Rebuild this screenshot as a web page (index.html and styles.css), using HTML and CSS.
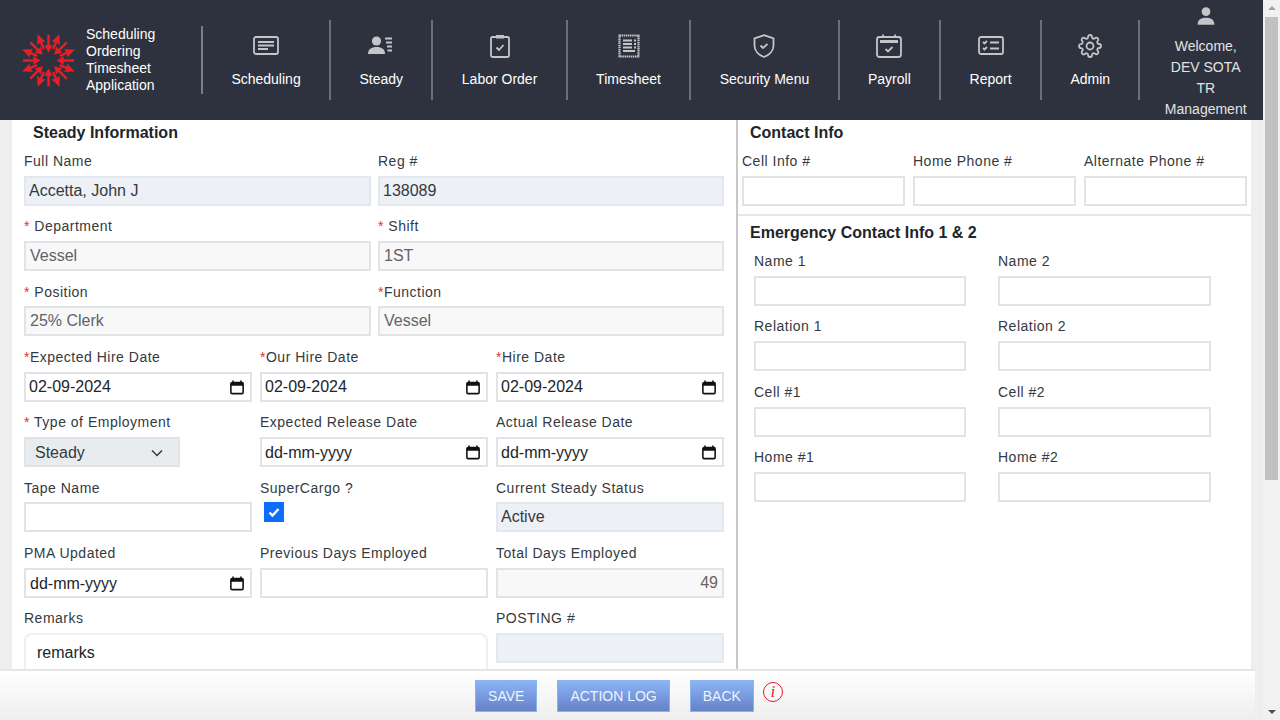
FILE: index.html
```html
<!DOCTYPE html>
<html lang="en">
<head>
    <meta charset="UTF-8">
    <title>Steady Information</title>
    <link rel="stylesheet" href="styles.css">
</head>
<body>
    <svg class="defs" width="0" height="0">
        <symbol id="cal" viewBox="0 0 16 16">
            <path d="M3.500 0v3M12.500 0v3" fill="none" stroke="#111" stroke-width="1.800"/>
            <rect x="1" y="2.400" width="14" height="12.600" rx="1.400" fill="none" stroke="#111" stroke-width="1.800"/>
            <rect x="1" y="2.400" width="14" height="3.600" fill="#111"/>
        </symbol>
        <symbol id="arrow" viewBox="0 0 60 60">
            <path d="M28.700 3h2.600v11h3.200L30 21.500 25.500 14h3.200z" fill="#ec1c24"/>
            <path d="M30 0 34.800 10.500 31.300 9.500V17h-2.600V9.500L25.200 10.500z" fill="#ec1c24" transform="rotate(22.500 30 30)"/>
        </symbol>
    </svg>
    <div class="app">
        <div class="page">
            <header class="topbar">
                <div class="brand">
                    <svg class="logo" viewBox="0 0 60 60" width="57" height="57">
                        <use href="#arrow" width="60" height="60"/>
                        <use href="#arrow" width="60" height="60" transform="rotate(45 30 30)"/>
                        <use href="#arrow" width="60" height="60" transform="rotate(90 30 30)"/>
                        <use href="#arrow" width="60" height="60" transform="rotate(135 30 30)"/>
                        <use href="#arrow" width="60" height="60" transform="rotate(180 30 30)"/>
                        <use href="#arrow" width="60" height="60" transform="rotate(225 30 30)"/>
                        <use href="#arrow" width="60" height="60" transform="rotate(270 30 30)"/>
                        <use href="#arrow" width="60" height="60" transform="rotate(315 30 30)"/>
                    </svg>
                    <div class="brand-text">Scheduling<br>Ordering<br>Timesheet<br>Application</div>
                </div>
                <nav class="menu">
                    <a class="menu-item">
                        <svg class="short" viewBox="0 0 26 20" width="26" height="20"><rect x="1" y="1" width="24" height="17" rx="2" class="ln"/><path d="M5 6h16M5 9.500h16M5 13h10" class="ln"/></svg>
                        <span>Scheduling</span>
                    </a>
                    <a class="menu-item">
                        <svg class="short" viewBox="0 0 26 20" width="26" height="20"><circle cx="8.500" cy="5" r="4.600" class="fl"/><path d="M0 18c0-5 3.500-7 8.500-7s8.500 2 8.500 7z" class="fl"/><path d="M17 2.500h7M18 6.500h6M19 10.500h5M19.500 14.500h4.500" class="ln"/></svg>
                        <span>Steady</span>
                    </a>
                    <a class="menu-item">
                        <svg viewBox="0 0 20 24" width="20" height="24"><path d="M6 3H2.500Q1 3 1 4.500v17Q1 23 2.500 23h15q1.500 0 1.500-1.500v-17Q19 3 17.500 3H14" class="ln"/><rect x="6" y="1" width="8" height="3.500" class="fl"/><path d="m6.500 13.500 2.500 2.500 4.500-5" class="ln"/></svg>
                        <span>Labor Order</span>
                    </a>
                    <a class="menu-item">
                        <svg viewBox="0 0 22 24" width="22" height="24"><path d="M1.500 1.500h19v21h-19z" class="ln dash"/><path d="M5 6.500h9M5 10h9M5 13.500h9M5 17h12M16 6.500h2M16 10h2M16 13.500h2" class="ln"/></svg>
                        <span>Timesheet</span>
                    </a>
                    <a class="menu-item">
                        <svg viewBox="0 0 22 24" width="22" height="24"><path d="M11 1.200 20.500 4.500v7c0 5-4 9.500-9.500 11.500C5.500 21 1.500 16.500 1.500 11.500v-7z" class="ln"/><path d="m7.500 11.500 2.500 2.500 4.500-4" class="ln"/></svg>
                        <span>Security Menu</span>
                    </a>
                    <a class="menu-item">
                        <svg viewBox="0 0 26 24" width="26" height="24"><rect x="1" y="3" width="24" height="20" rx="2.500" class="ln"/><path d="M7 .500v3M19 .500v3" class="ln"/><rect x="4" y="6" width="18" height="3" class="fl"/><path d="m9.500 15 2.500 2.500 4.500-4.500" class="ln"/></svg>
                        <span>Payroll</span>
                    </a>
                    <a class="menu-item">
                        <svg class="short" viewBox="0 0 26 20" width="26" height="20"><rect x="1" y="1" width="24" height="17" rx="2" class="ln"/><path d="m5 6 1.500 1.500L9 5M5 12l1.500 1.500L9 11M12 6.500h9M12 12.500h9" class="ln"/></svg>
                        <span>Report</span>
                    </a>
                    <a class="menu-item">
                        <svg viewBox="0 0 24 24" width="24" height="24"><circle cx="12" cy="12" r="3.500" class="ln"/><path class="ln" d="M19.400 15a1.650 1.650 0 0 0 .33 1.820l.06.06a2 2 0 0 1 0 2.830 2 2 0 0 1-2.830 0l-.06-.06a1.650 1.650 0 0 0-1.820-.33 1.650 1.650 0 0 0-1 1.510V21a2 2 0 0 1-2 2 2 2 0 0 1-2-2v-.09A1.650 1.650 0 0 0 9 19.400a1.650 1.650 0 0 0-1.820.33l-.06.06a2 2 0 0 1-2.830 0 2 2 0 0 1 0-2.830l.06-.06a1.650 1.650 0 0 0 .33-1.820 1.650 1.650 0 0 0-1.510-1H3a2 2 0 0 1-2-2 2 2 0 0 1 2-2h.09A1.650 1.650 0 0 0 4.600 9a1.650 1.650 0 0 0-.33-1.820l-.06-.06a2 2 0 0 1 0-2.830 2 2 0 0 1 2.830 0l.06.06a1.650 1.650 0 0 0 1.820.33H9a1.650 1.650 0 0 0 1-1.510V3a2 2 0 0 1 2-2 2 2 0 0 1 2 2v.09a1.650 1.650 0 0 0 1 1.510 1.650 1.650 0 0 0 1.820-.33l.06-.06a2 2 0 0 1 2.830 0 2 2 0 0 1 0 2.830l-.06.06a1.650 1.650 0 0 0-.33 1.820V9a1.650 1.650 0 0 0 1.510 1H21a2 2 0 0 1 2 2 2 2 0 0 1-2 2h-.09a1.650 1.650 0 0 0-1.510 1z"/></svg>
                        <span>Admin</span>
                    </a>
                    <a class="menu-item user">
                        <svg viewBox="0 0 20 20" width="20" height="20"><circle cx="10" cy="5" r="4.700" class="fl"/><path d="M1 19c0-5 3-7.500 9-7.500s9 2.500 9 7.500z" class="fl"/></svg>
                        <span>Welcome,</span>
                        <span>DEV SOTA</span>
                        <span>TR</span>
                        <span>Management</span>
                    </a>
                </nav>
            </header>

            <main class="content">
                <section class="steady">
                    <h3 class="title">Steady Information</h3>
                    <div class="form">
                        <div class="field half"><label>Full Name</label><input class="locked" value="Accetta, John J"></div>
                        <div class="field half"><label>Reg #</label><input class="locked" value="138089"></div>
                        <div class="field half"><label><i>*</i> Department</label><input class="grey" value="Vessel"></div>
                        <div class="field half"><label><i>*</i> Shift</label><input class="grey" value="1ST"></div>
                        <div class="field half"><label><i>*</i> Position</label><input class="grey" value="25% Clerk"></div>
                        <div class="field half"><label><i>*</i>Function</label><input class="grey" value="Vessel"></div>

                        <div class="field third"><label><i>*</i>Expected Hire Date</label><div class="date">02-09-2024<svg width="14" height="15"><use href="#cal"/></svg></div></div>
                        <div class="field third"><label><i>*</i>Our Hire Date</label><div class="date">02-09-2024<svg width="14" height="15"><use href="#cal"/></svg></div></div>
                        <div class="field third"><label><i>*</i>Hire Date</label><div class="date">02-09-2024<svg width="14" height="15"><use href="#cal"/></svg></div></div>

                        <div class="field third">
                            <label><i>*</i> Type of Employment</label>
                            <div class="select">Steady<svg width="12" height="8" viewBox="0 0 12 8"><path d="m1 1.500 5 5 5-5" fill="none" stroke="#343a40" stroke-width="1.500"/></svg></div>
                        </div>
                        <div class="field third"><label>Expected Release Date</label><div class="date">dd-mm-yyyy<svg width="14" height="15"><use href="#cal"/></svg></div></div>
                        <div class="field third"><label>Actual Release Date</label><div class="date">dd-mm-yyyy<svg width="14" height="15"><use href="#cal"/></svg></div></div>

                        <div class="field third"><label>Tape Name</label><input></div>
                        <div class="field third">
                            <label>SuperCargo ?</label>
                            <span class="check"><svg width="20" height="20" viewBox="0 0 20 20"><path d="m5.500 10.500 3 3 6-6.500" fill="none" stroke="#fff" stroke-width="2.400"/></svg></span>
                        </div>
                        <div class="field third"><label>Current Steady Status</label><input class="locked" value="Active"></div>

                        <div class="field third"><label>PMA Updated</label><div class="date shifted">dd-mm-yyyy<svg width="14" height="15"><use href="#cal"/></svg></div></div>
                        <div class="field third"><label>Previous Days Employed</label><input></div>
                        <div class="field third"><label>Total Days Employed</label><input class="grey num" value="49"></div>

                        <div class="field two-thirds"><label>Remarks</label><div class="remarks">remarks</div></div>
                        <div class="field third"><label>POSTING #</label><input class="locked"></div>
                    </div>
                </section>

                <section class="contact">
                    <div class="contact-top">
                        <h3 class="title">Contact Info</h3>
                        <div class="phones">
                            <div class="field"><label>Cell Info #</label><input></div>
                            <div class="field"><label>Home Phone #</label><input></div>
                            <div class="field"><label>Alternate Phone #</label><input></div>
                        </div>
                    </div>
                    <h3 class="title second">Emergency Contact Info 1 &amp; 2</h3>
                    <div class="emergency">
                        <div class="field"><label>Name 1</label><input></div>
                        <div class="field"><label>Name 2</label><input></div>
                        <div class="field"><label>Relation 1</label><input></div>
                        <div class="field"><label>Relation 2</label><input></div>
                        <div class="field"><label>Cell #1</label><input></div>
                        <div class="field"><label>Cell #2</label><input></div>
                        <div class="field"><label>Home #1</label><input></div>
                        <div class="field"><label>Home #2</label><input></div>
                    </div>
                </section>
            </main>

            <footer class="actions">
                <button class="btn">SAVE</button>
                <button class="btn">ACTION LOG</button>
                <button class="btn">BACK</button>
                <span class="info">i</span>
            </footer>
        </div>
        <div class="scrollbar">
            <span class="up"></span>
            <span class="thumb"></span>
            <span class="down"></span>
        </div>
    </div>
</body>
</html>
```

FILE: styles.css
```css
* { margin: 0; padding: 0; box-sizing: border-box; }
html, body { height: 100%; overflow: hidden; }
body {
    font-family: "Liberation Sans", Arial, sans-serif;
    background-color: #eeeeee;
    color: #212529;
}
.defs { display: block; height: 0; }
.app { display: flex; height: 720px; }
.page { flex: 1; position: relative; overflow: hidden; }

/* top bar */
.topbar {
    height: 120px;
    background-color: #2e323e;
    display: flex;
    align-items: center;
    color: #fff;
}
.brand {
    width: 203px;
    height: 68px;
    flex: none;
    display: flex;
    align-items: center;
    padding-left: 20px;
    gap: 9px;
    border-right: 2px solid #7b7e86;
}
.brand-text { font-size: 14px; line-height: 17px; }
.menu { display: flex; flex: 1; height: 80px; }
.menu-item {
    display: flex;
    flex-direction: column;
    align-items: center;
    justify-content: flex-end;
    padding: 0 28.400px 13px;
    font-size: 14px;
    line-height: 16px;
    border-right: 2px solid #6c6f78;
    gap: 13px;
}
.menu-item svg { display: block; }
.menu-item svg.short { margin: 2px 0; }
.menu-item .ln { fill: none; stroke: #c4c5c9; stroke-width: 1.800; }
.menu-item .fl { fill: #c4c5c9; }
.menu-item .dash { stroke-dasharray: 1.500 .6; stroke-width: 2.200; }
.menu-item.user {
    border-right: 0;
    flex: 1;
    padding: 0 0 0 8px;
    gap: 0;
    justify-content: flex-start;
    line-height: 21.100px;
    color: #e2e3e5;
    height: 120px;
    margin-top: -20px;
}
.menu-item.user svg { margin: 7px 0 10px; }

/* content */
.content {
    margin: 0 12px;
    height: 600px;
    background-color: #fff;
    display: flex;
}
.title { font-size: 16px; line-height: 24px; font-weight: bold; color: #212529; padding-top: 1px; box-sizing: content-box; }
.field label {
    display: block;
    font-size: 14px;
    line-height: 21px;
    letter-spacing: .5px;
    color: #343a40;
    margin-bottom: 3.830px;
}
.field label i { font-style: normal; color: #e03131; }
.field input, .date, .select {
    display: block;
    width: 100%;
    height: 30px;
    border: 2px solid #e1e3e6;
    background-color: #fff;
    font-family: inherit;
    font-size: 16px;
    color: #495057;
    padding: 0 3px;
    outline: 0;
}
.field input.locked { background-color: #edf0f5; border-color: #e2e8ef; color: #343a40; }
.field input.grey { background-color: #f8f8f8; border-color: #e1e3e6; color: #5f6368; padding-left: 4px; }
.field input.num { text-align: right; padding-right: 4px; color: #6b625e; }
.half:nth-child(odd) input { width: 347px; }
.date {
    display: flex;
    align-items: center;
    justify-content: space-between;
    padding: 1px 6px 0 3px;
    color: #212529;
}
.date.shifted { padding: 2px 6px 0 4px; }
.select {
    width: 156px;
    display: flex;
    align-items: center;
    justify-content: space-between;
    background-color: #e9ecef;
    padding: 1px 15px 0 9px;
    color: #343a40;
}
.check {
    display: flex;
    width: 20px;
    height: 20px;
    margin: .5px 0 0 4px;
    background-color: #0d6efd;
}
.remarks {
    height: 90px;
    border: 2px solid #eeeff1;
    border-radius: 8px;
    padding: 6px 11px;
    font-size: 16px;
    line-height: 24px;
    color: #212529;
}

/* left form */
.steady { width: 726px; flex: none; border-right: 2px solid #c8c8c8; }
.steady .title { padding-left: 21px; }
.form {
    display: grid;
    grid-template-columns: repeat(6, 110px);
    grid-auto-rows: 65.330px;
    column-gap: 8px;
    padding: 6px 0 0 12px;
}
.half { grid-column: span 3; }
.third { grid-column: span 2; }
.two-thirds { grid-column: span 4; }

/* right column */
.contact { flex: 1; }
.contact .title { padding-left: 12px; }
.contact .title.second { padding-top: 5px; }
.contact-top { height: 96px; border-bottom: 2px solid #e6e6e6; }
.phones {
    display: grid;
    grid-template-columns: repeat(3, 163px);
    column-gap: 8px;
    padding: 6px 0 0 4px;
}
.emergency {
    display: grid;
    grid-template-columns: 212px 213px;
    grid-auto-rows: 65.330px;
    column-gap: 32px;
    padding: 5.900px 0 0 16px;
}
.emergency label { margin-bottom: 4.100px; }

/* bottom action bar */
.actions {
    position: absolute;
    left: 0;
    right: 8px;
    bottom: 0;
    height: 51px;
    border-top: 2px solid #e6e6e6;
    background: linear-gradient(#ffffff, #eeeeee);
    display: flex;
    justify-content: center;
    align-items: center;
    gap: 20px;
    padding: 0 0 0 3px;
}
.btn {
    height: 32px;
    padding: 0 12px;
    border: 1px solid #89b5ec;
    background: linear-gradient(#8ab4f5, #6681c9);
    color: #eef3fd;
    font-family: inherit;
    font-size: 14px;
    margin-top: 1px;
}
.info {
    width: 20px;
    height: 20px;
    margin: -7px 0 0 -11px;
    border: 1.500px solid #f0142c;
    border-radius: 50%;
    color: #e8202c;
    font-family: "Liberation Serif", serif;
    font-style: italic;
    font-size: 17px;
    line-height: 17px;
    text-align: center;
}

/* scrollbar drawn as a plain column */
.scrollbar {
    width: 17px;
    flex: none;
    background-color: #f1f1f1;
    display: flex;
    flex-direction: column;
    align-items: center;
    position: relative;
}
.up { margin-top: 6px; border: 4px solid transparent; border-top: 0; border-bottom: 4px solid #a3a3a3; }
.thumb { width: 13px; height: 463px; margin-top: 7px; background-color: #c1c1c1; }
.down { position: absolute; bottom: 6px; border: 4px solid transparent; border-bottom: 0; border-top: 4px solid #505050; }
```
